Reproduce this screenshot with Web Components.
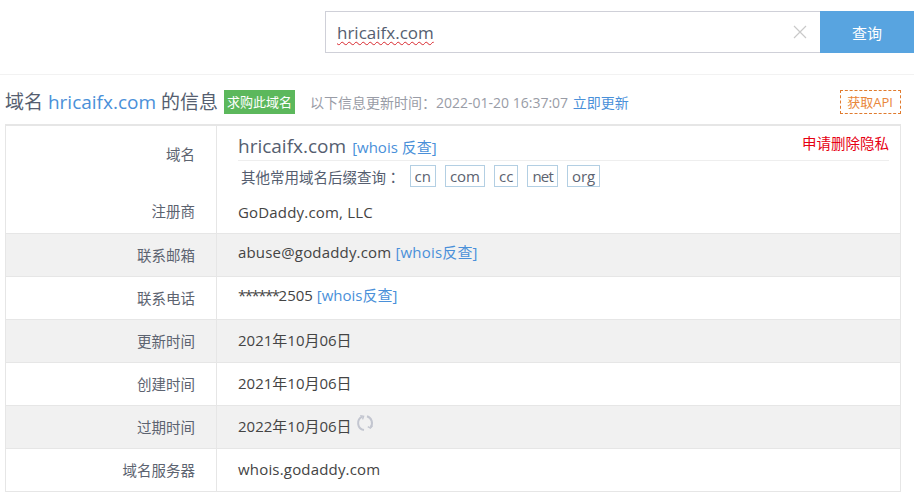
<!DOCTYPE html>
<html lang="zh">
<head>
<meta charset="utf-8">
<title>whois</title>
<style>
  html, body { margin: 0; background: #fff; }
  body { font-family: "Open Sans", "Noto Sans CJK SC", sans-serif; color: #444; width: 914px; height: 494px; overflow: hidden; }
</style>
</head>
<body>
<search-bar value="hricaifx.com"></search-bar>
<info-head domain="hricaifx.com"></info-head>
<info-table>
  <info-domain-row></info-domain-row>
  <info-row label="联系邮箱" shade raised wide>abuse@godaddy.com <a>[whois反查]</a></info-row>
  <info-row label="联系电话" raised><span style="letter-spacing:-1.5px">******</span>2505 <a>[whois反查]</a></info-row>
  <info-row label="更新时间" shade>2021年10月06日</info-row>
  <info-row label="创建时间">2021年10月06日</info-row>
  <info-row label="过期时间" shade>2022年10月06日 <spin-icon></spin-icon></info-row>
  <info-row label="域名服务器" wide>whois.godaddy.com</info-row>
</info-table>

<script>
(() => {
  const colon = `<span style="font-family:'Noto Sans CJK TC',sans-serif">：</span>`;

  class SearchBar extends HTMLElement {
    constructor() {
      super();
      this.attachShadow({ mode: 'open' });
      this.shadowRoot.innerHTML = `
        <style>
          :host { display: flex; justify-content: flex-end; height: 75px; box-sizing: border-box; padding-top: 11px; border-bottom: 1px solid #f2f2f2; }
          .box { display: flex; width: 589px; height: 42px; }
          .input { flex: 1; display: flex; align-items: center; justify-content: space-between; box-sizing: border-box; border: 1px solid #cfd0d8; border-right: 0; padding: 0 13px 0 11px; }
          .text { font-size: 17px; color: #555e70; text-decoration: underline wavy #d8272d 1px; text-underline-offset: 2px; }
          svg { display: block; }
          .btn { width: 94px; background: #58a4e0; color: #fff; font-size: 15px; display: flex; align-items: center; justify-content: center; }
        </style>
        <div class="box">
          <div class="input">
            <span class="text"></span>
            <svg width="14" height="14" viewBox="0 0 14 14"><path d="M1 1l12 12M13 1L1 13" stroke="#c9c9c9" stroke-width="1.2" fill="none"/></svg>
          </div>
          <div class="btn">查询</div>
        </div>`;
      this.shadowRoot.querySelector('.text').textContent = this.getAttribute('value');
    }
  }

  class InfoHead extends HTMLElement {
    constructor() {
      super();
      this.attachShadow({ mode: 'open' });
      this.shadowRoot.innerHTML = `
        <style>
          :host { display: flex; align-items: center; height: 49px; box-sizing: border-box; padding: 4px 13px 0 5px; }
          h1 { margin: -2px 0 0; font-size: 19px; font-weight: 400; color: #555e70; white-space: nowrap; }
          h1 span { color: #4a90d9; }
          .buy { margin-left: 6px; background: #5cb85c; color: #fff; font-size: 13px; height: 24px; line-height: 24px; padding: 0 3px; }
          .time { margin-left: 15px; font-size: 14px; color: #999ca6; white-space: nowrap; }
          .time a { color: #4a90d9; margin-left: 1px; }
          .api { margin-left: auto; border: 1px dashed #e07b2e; color: #e9863a; font-size: 13px; height: 22px; line-height: 22px; padding: 0 7px 0 6px; }
        </style>
        <h1>域名 <span></span> 的信息</h1>
        <div class="buy">求购此域名</div>
        <div class="time">以下信息更新时间${colon}2022-01-20 16:37:07 <a>立即更新</a></div>
        <div class="api">获取API</div>`;
      this.shadowRoot.querySelector('h1 span').textContent = this.getAttribute('domain');
    }
  }

  class InfoTable extends HTMLElement {
    constructor() {
      super();
      this.attachShadow({ mode: 'open' });
      this.shadowRoot.innerHTML = `
        <style>
          :host { display: block; margin: 0 13px 0 5px; border: 1px solid #e6e6e6; border-top-width: 2px; border-bottom: 0; }
        </style>
        <slot></slot>`;
    }
  }

  class InfoRow extends HTMLElement {
    constructor() {
      super();
      this.attachShadow({ mode: 'open' });
      this.shadowRoot.innerHTML = `
        <style>
          :host { display: grid; grid-template-columns: 211px 1fr; height: 43px; box-sizing: border-box; border-bottom: 1px solid #e6e6e6; }
          :host([shade]) { background: #f1f1f1; }
          .label { display: flex; align-items: center; justify-content: flex-end; padding: 0 21px 2px 0; font-size: 14.5px; color: #5c6370; border-right: 1px solid #e6e6e6; }
          .val { padding: 0 0 0 21px; font-size: 15px; line-height: 41px; color: #444; white-space: nowrap; }
          :host([raised]) .val { line-height: 36px; }
          :host([wide]) .val { letter-spacing: .18px; }
          ::slotted(a) { color: #4a90d9; }
        </style>
        <div class="label"></div>
        <div class="val"><slot></slot></div>`;
      this.shadowRoot.querySelector('.label').textContent = this.getAttribute('label');
    }
  }

  class InfoDomainRow extends HTMLElement {
    constructor() {
      super();
      this.attachShadow({ mode: 'open' });
      this.shadowRoot.innerHTML = `
        <style>
          :host { display: grid; grid-template-columns: 211px 1fr; height: 108px; box-sizing: border-box; border-bottom: 1px solid #e6e6e6; }
          .labels { border-right: 1px solid #e6e6e6; font-size: 14.5px; color: #5c6370; text-align: right; padding-right: 21px; }
          .labels div:first-child { padding-top: 19px; line-height: 20px; }
          .labels div:last-child { padding-top: 37px; line-height: 20px; }
          .main { padding: 7px 11px 0 21px; }
          .top { display: flex; align-items: baseline; height: 27px; border-bottom: 1px solid #eee; }
          .name { font-size: 19px; line-height: 26px; color: #555e70; }
          .top a { margin-left: 6px; font-size: 15px; color: #4a90d9; }
          .top b { margin-left: auto; align-self: flex-start; margin-top: 1px; line-height: 20px; font-weight: 400; font-size: 14.5px; color: #e60012; }
          .others { display: flex; align-items: center; height: 30px; padding-left: 3px; font-size: 14.5px; color: #555e70; }
          .others span.tag { margin-left: 9px; height: 22px; line-height: 20px; box-sizing: border-box; border: 1px solid #b3cfe3; padding: 0 4px; font-size: 15px; color: #5c6370; }
          .others span.tag:first-of-type { margin-left: 13px; }
          .others span.net { letter-spacing: -.8px; }
          .reg { margin-top: 11px; font-size: 15px; letter-spacing: .18px; line-height: 20px; color: #444; }
        </style>
        <div class="labels"><div>域名</div><div>注册商</div></div>
        <div class="main">
          <div class="top"><span class="name">hricaifx.com</span><a>[whois 反查]</a><b>申请删除隐私</b></div>
          <div class="others">其他常用域名后缀查询${colon}<span class="tag">cn</span><span class="tag">com</span><span class="tag">cc</span><span class="tag net">net</span><span class="tag">org</span></div>
          <div class="reg">GoDaddy.com, LLC</div>
        </div>`;
    }
  }

  class SpinIcon extends HTMLElement {
    constructor() {
      super();
      this.attachShadow({ mode: 'open' });
      this.shadowRoot.innerHTML = `
        <style>:host { display: inline-block; width: 18px; height: 18px; vertical-align: 0; line-height: 0; } svg { display: block; }</style>
        <svg width="18" height="18" viewBox="0 0 18 18" fill="none" stroke="#c3c6d0" stroke-width="2">
          <path d="M6.5 2.6A7 7 0 0 0 8 16"/>
          <path d="M4.2 1.6l3.4.6-1 3.2" stroke-width="1.4"/>
          <path d="M11 2.3A7 7 0 0 1 14.6 13.2"/>
          <path d="M16.6 11.6l-2.2 2.6-2.6-1.6" stroke-width="1.4"/>
        </svg>`;
    }
  }

  customElements.define('search-bar', SearchBar);
  customElements.define('info-head', InfoHead);
  customElements.define('info-table', InfoTable);
  customElements.define('info-row', InfoRow);
  customElements.define('info-domain-row', InfoDomainRow);
  customElements.define('spin-icon', SpinIcon);
})();
</script>
</body>
</html>
